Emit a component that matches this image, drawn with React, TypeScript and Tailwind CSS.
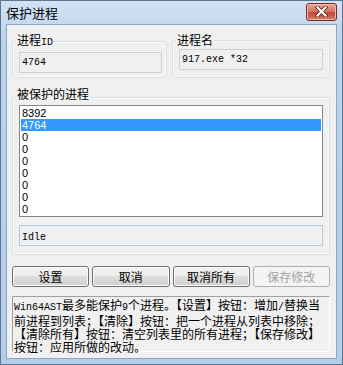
import React from "react";

const mono = "font-['Liberation_Mono',monospace] text-[10px]";
const cjk = "font-['Noto_Sans_CJK_SC','Noto_Sans',sans-serif]";

// ASCII runs get the narrow mono face, the rest stays CJK
function Mixed({ text }: { text: string }) {
  const parts = text.split(/([\x20-\x7e]+)/);
  return (
    <>
      {parts.map((p, i) =>
        i % 2 === 1 ? (
          <span key={i} className={mono}>
            {p}
          </span>
        ) : (
          <React.Fragment key={i}>{p}</React.Fragment>
        )
      )}
    </>
  );
}

function Group({
  label,
  className,
  legendClass,
  children,
}: {
  label: string;
  className?: string;
  legendClass?: string;
  children: React.ReactNode;
}) {
  return (
    <fieldset
      className={`rounded-[3px] border border-[#d5dfe5] px-[6px] shadow-[inset_0_0_0_1px_#fbfbfb] ${className ?? ""}`}
    >
      <legend
        className={`ml-[-3px] px-[1px] text-[12px] leading-[12px] text-black ${cjk} ${legendClass ?? ""}`}
      >
        <Mixed text={label} />
      </legend>
      {children}
    </fieldset>
  );
}

function Button({ label, disabled }: { label: string; disabled?: boolean }) {
  return (
    <button
      className={`h-[21px] rounded-[3px] border text-[12px] leading-[12px] ${cjk} ${
        disabled
          ? "border-[#adb2b5] bg-[#f4f4f4] text-[#a3a3a3]"
          : "border-[#707070] bg-[linear-gradient(#f2f2f2_0%,#ebebeb_50%,#dddddd_50%,#cfcfcf_100%)] text-black shadow-[inset_0_0_0_1px_#fcfcfc]"
      }`}
    >
      {label}
    </button>
  );
}

const items = ["8392", "4764", "0", "0", "0", "0", "0", "0", "0"];

const help = [
  "Win64AST最多能保护9个进程。【设置】按钮：增加/替换当",
  "前进程到列表；【清除】按钮：把一个进程从列表中移除；",
  "【清除所有】按钮：清空列表里的所有进程；【保存修改】",
  "按钮：应用所做的改动。",
];

export default function App() {
  return (
    <div className="flex h-[365px] w-[343px] flex-col border border-[#5a7895] bg-[linear-gradient(#d3e2f3,#bcd3ec_40px,#b4cde9)] px-[5px] pb-[5px]">
      {/* title bar */}
      <div className="flex h-[23px] items-center justify-between">
        <span className={`text-[13px] leading-[13px] text-black ${cjk}`}>保护进程</span>
        <div className="mt-[-2px] flex h-[18px] w-[31px] items-center justify-center rounded-[3px] border border-[#7a2a22] bg-[linear-gradient(#e9a99b,#d2705f_50%,#c0463a_51%,#d1806a)] shadow-[inset_0_0_0_1px_#f0b8a8]">
          <svg width="13" height="11" viewBox="0 0 13 11">
            <path
              d="M2.5 1.5 L10.5 9.5 M10.5 1.5 L2.5 9.5"
              stroke="#5a2018"
              strokeWidth="3.8"
              strokeLinecap="square"
            />
            <path
              d="M2.5 1.5 L10.5 9.5 M10.5 1.5 L2.5 9.5"
              stroke="#ffffff"
              strokeWidth="2.2"
              strokeLinecap="square"
            />
          </svg>
        </div>
      </div>

      {/* client area */}
      <div className="flex flex-1 flex-col border border-[#8ea6c2] bg-[#f0f0f0] pl-[5px] pr-[6px] pt-[9px]">
        <div className="flex gap-[5px]">
          <Group label="进程ID" className="h-[44px] w-[155px] pr-[4px]">
            <div className="mt-[3px] flex h-[21px] items-center border border-[#ccd1d6] px-[2px] text-black">
              <span className={mono}>4764</span>
            </div>
          </Group>
          <Group label="进程名" className="h-[44px] w-[158px] pr-[6px]">
            <div className="mt-[3px] flex h-[21px] items-center border border-[#ccd1d6] px-[2px] text-black">
              <span className={mono}>917.exe *32</span>
            </div>
          </Group>
        </div>

        <Group
          label="被保护的进程"
          className="mt-[13px] h-[164px] pr-[6px]"
          legendClass="relative top-[-3px]"
        >
          <div className="mt-[2px] border border-[#828790] bg-white p-[1px]">
            {items.map((it, i) => (
              <div
                key={i}
                className={`h-[12px] pl-[1px] font-['Liberation_Sans',sans-serif] text-[11px] leading-[12px] ${
                  i === 1 ? "bg-[#3399ff] text-white" : "text-black"
                }`}
              >
                {it}
              </div>
            ))}
          </div>
          <div className="mt-[8px] h-[21px] border border-[#b5c8dc] px-[2px] pt-[2px] leading-[12px] text-black">
            <span className={mono}>Idle</span>
          </div>
        </Group>

        <div className="mt-[11px] grid grid-cols-4 gap-[3px]">
          <Button label="设置" />
          <Button label="取消" />
          <Button label="取消所有" />
          <Button label="保存修改" disabled />
        </div>

        <div
          className={`mt-[9px] h-[56px] border border-b-white border-l-[#a0a0a0] border-r-white border-t-[#a0a0a0] p-[1px] text-[12px] leading-[13px] text-black ${cjk}`}
        >
          {help.map((l, i) => (
            <div key={i} className="whitespace-nowrap">
              <Mixed text={l} />
            </div>
          ))}
        </div>
      </div>
    </div>
  );
}
